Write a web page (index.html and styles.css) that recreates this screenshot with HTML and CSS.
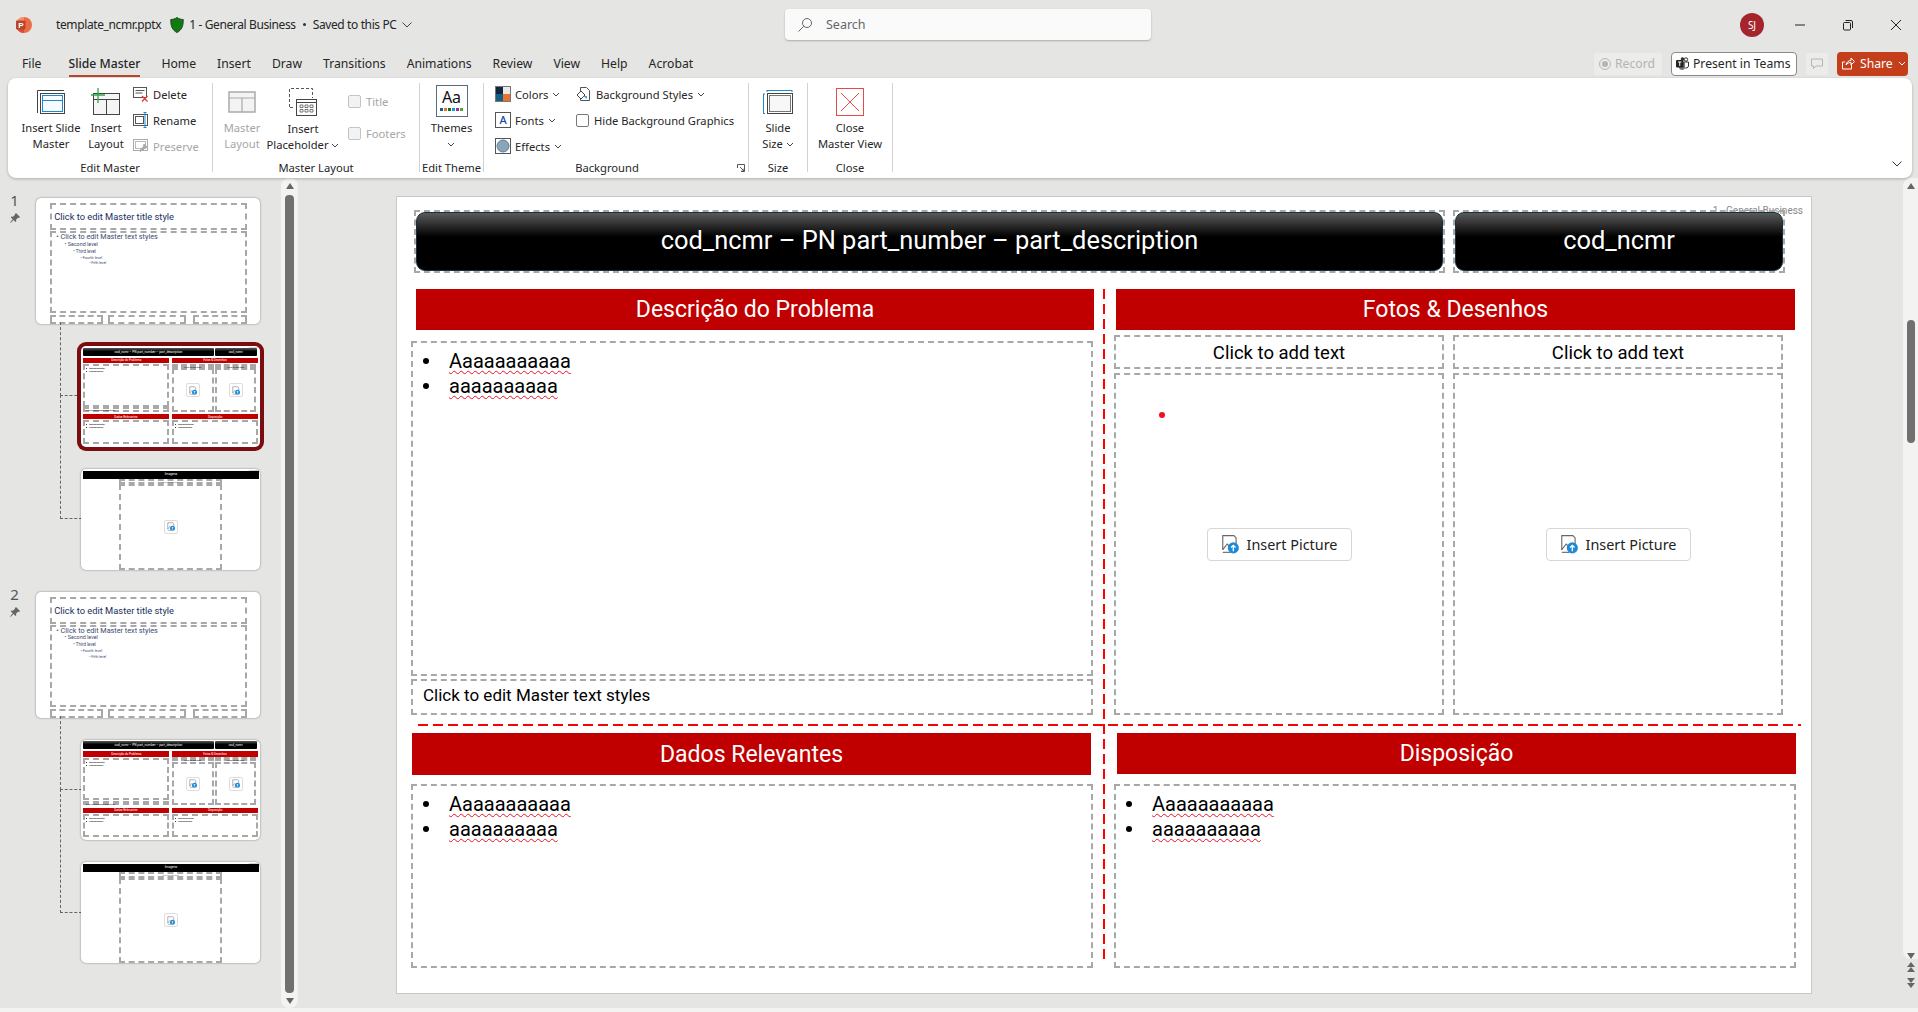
FILE: index.html
```html
<!DOCTYPE html>
<html lang="en">
<head>
	<meta charset="UTF-8">
	<title>template_ncmr.pptx - PowerPoint</title>
	<link rel="stylesheet" href="styles.css">
</head>
<body>
	<svg class="defs" aria-hidden="true">
		<symbol id="chev" viewBox="0 0 8 5"><path d="M1 1l3 3 3-3" fill="none" stroke="#444" stroke-width="1"/></symbol>
		<symbol id="picicon" viewBox="0 0 16 18">
			<path d="M1.5 14.5v-13h10l2 2v6" fill="#fff" stroke="#666"/>
			<path d="M1.5 14l4-5 3 3 2-1" fill="none" stroke="#666"/>
			<path d="M1.5 16.5h7" stroke="#666"/>
			<circle cx="11" cy="12.5" r="5" fill="#1c8ad6"/>
			<path d="M11 15.5v-5M9 12.2l2-2 2 2" fill="none" stroke="#fff" stroke-width="1.2"/>
		</symbol>
		<symbol id="pin" viewBox="0 0 10 10"><path d="M6 0l4 4-1 1-1-.3-2 2 .3 1.6-.8.7-2-2L.8 9.7 0 9.5l2.700-3.300-2-2 .7-.8 1.600.3 2-2L5 1z" fill="#666"/></symbol>
	</svg>

	<div class="titlebar">
		<div class="title-left">
			<svg class="ppt-logo" viewBox="0 0 16 16" width="16" height="16">
				<circle cx="8" cy="8" r="8" fill="#ed6c47"/>
				<path d="M8 0a8 8 0 0 0-8 8h8z" fill="#ff8f6b"/>
				<path d="M8 16a8 8 0 0 1-8-8h8z" fill="#d35230"/>
				<rect x="0" y="3.500" width="9.500" height="9" rx="1" fill="#b7472a"/>
				<text x="2.200" y="11" class="ppt-p">P</text>
			</svg>
			<span class="filename">template_ncmr.pptx</span>
			<svg class="shield" viewBox="0 0 14 16" width="14" height="16"><path d="M7 .5c2 1.500 4 2 6.200 2 .2 6-1.200 10.500-6.200 13C2 13 .6 8.500.8 2.500 3 2.500 5 2 7 .5z" fill="#107c10" stroke="#25402a"/></svg>
			<span class="doc-status">1 - General Business</span>
			<span class="doc-dot"></span>
			<span class="doc-status">Saved to this PC</span>
			<svg class="chev-lg" viewBox="0 0 10 6" width="10" height="6"><path d="M.5.5L5 5 9.500.5" fill="none" stroke="#444"/></svg>
		</div>
		<div class="search">
			<svg viewBox="0 0 16 16" width="16" height="16"><circle cx="10" cy="6" r="4.500" fill="none" stroke="#666"/><path d="M6.800 9.200L1.500 14.500" stroke="#666"/></svg>
			<span>Search</span>
		</div>
		<div class="title-right">
			<div class="avatar">SJ</div>
			<div class="winbtn"><svg viewBox="0 0 12 12" width="12" height="12"><path d="M1 6h10" stroke="#222"/></svg></div>
			<div class="winbtn"><svg viewBox="0 0 12 12" width="12" height="12"><rect x="1.500" y="3.500" width="7" height="7.500" rx="1" fill="none" stroke="#222"/><path d="M3.500 1.500h5.500a1.500 1.500 0 0 1 1.500 1.500v6" fill="none" stroke="#222"/></svg></div>
			<div class="winbtn"><svg viewBox="0 0 12 12" width="12" height="12"><path d="M1 1l10 10M11 1L1 11" stroke="#222"/></svg></div>
		</div>
	</div>

	<div class="tabrow">
		<div class="tabs">
			<span class="tab tab-file">File</span>
			<span class="tab active">Slide Master</span>
			<span class="tab">Home</span>
			<span class="tab">Insert</span>
			<span class="tab">Draw</span>
			<span class="tab">Transitions</span>
			<span class="tab">Animations</span>
			<span class="tab">Review</span>
			<span class="tab">View</span>
			<span class="tab">Help</span>
			<span class="tab">Acrobat</span>
		</div>
		<div class="tab-actions">
			<div class="soft-btn record"><svg viewBox="0 0 12 12" width="12" height="12"><circle cx="6" cy="6" r="5.500" fill="none" stroke="#b5b5b5"/><circle cx="6" cy="6" r="3" fill="#b5b5b5"/></svg>Record</div>
			<div class="teams-btn">
				<svg viewBox="0 0 13 13" width="13" height="13"><circle cx="10" cy="2.500" r="1.700" fill="none" stroke="#333"/><path d="M8 5h4.500v4a2.500 2.500 0 0 1-4 1.500" fill="none" stroke="#333"/><circle cx="6.500" cy="2" r="1.800" fill="#333"/><path d="M3 5h6v5a3 3 0 0 1-6 0z" fill="#777"/><rect x="0" y="3" width="7.500" height="7.500" rx="1" fill="#222"/><path d="M2 5h3.500M3.750 5v4" stroke="#fff" stroke-width="1"/></svg>
				Present in Teams
			</div>
			<div class="soft-btn comment"><svg viewBox="0 0 12 12" width="12" height="12"><path d="M.5 1h11v7H5l-2.500 2.500V8h-2z" fill="none" stroke="#b5b5b5"/></svg></div>
			<div class="share-btn">
				<svg viewBox="0 0 13 13" width="13" height="13"><path d="M9.500 6.500V12H.5V5H3M4 8c.5-3 2.500-4.500 5-4.500V1l3.500 3.500L9 8V5.500C7 5.500 5.200 6.300 4 8z" fill="none" stroke="#fff"/></svg>
				<span>Share</span>
				<svg class="chev" viewBox="0 0 8 5"><path d="M1 1l3 3 3-3" fill="none" stroke="#fff"/></svg>
			</div>
		</div>
	</div>

	<div class="ribbon">
		<div class="group g-master">
			<div class="group-body">
				<div class="big w58">
					<div class="big-icon">
						<svg viewBox="0 0 28 24" width="28" height="24"><path d="M.5 23V.5H27" fill="none" stroke="#444"/><rect x="3.500" y="3.500" width="24" height="20" fill="#fff" stroke="#444"/><rect x="5.500" y="5.500" width="20" height="16" fill="#f5fbff" stroke="#1e88c9"/><path d="M5.500 10.500h20" stroke="#1e88c9"/></svg>
					</div>
					<div class="big-text">Insert Slide<br>Master</div>
				</div>
				<div class="big w36">
					<div class="big-icon">
						<svg viewBox="0 0 30 28" width="30" height="28"><rect x="2.500" y="5.500" width="26" height="21" fill="#f5f5f5" stroke="#444"/><path d="M2.500 11.500h26M15.500 11.500v15" stroke="#444"/><path d="M0 7h14M7 0v15" stroke="#2ea84a" stroke-width="1.300"/></svg>
					</div>
					<div class="big-text">Insert<br>Layout</div>
				</div>
				<div class="stack">
					<div class="small">
						<svg viewBox="0 0 16 16" width="16" height="16"><rect x=".5" y="1.500" width="13" height="10" fill="#fff" stroke="#555"/><path d="M2.500 4.500h9M2.500 7h7" stroke="#555"/><path d="M9 10l5.500 5.500M14.500 10L9 15.500" stroke="#e03a3a" stroke-width="1.300"/></svg>
						Delete
					</div>
					<div class="small">
						<svg viewBox="0 0 16 16" width="16" height="16"><rect x=".5" y="2.500" width="14" height="11" fill="#fff" stroke="#555"/><rect x="2.500" y="4.500" width="8" height="7" fill="none" stroke="#555"/><path d="M10.500.5h3M12 .5v15M10.500 15.500h3" stroke="#1e88c9"/></svg>
						Rename
					</div>
					<div class="small off">
						<svg viewBox="0 0 16 16" width="16" height="16"><rect x=".5" y="1.500" width="14" height="11" fill="#fff" stroke="#aaa"/><rect x="2.500" y="3.500" width="10" height="7" fill="none" stroke="#bbb"/><path d="M11 6l3 3-2 1-3 3-1.500-1.500 3-3zM7 14l2-2" fill="#aaa" stroke="#aaa"/></svg>
						Preserve
					</div>
				</div>
			</div>
			<div class="group-label">Edit Master</div>
		</div>

		<div class="group g-layout">
			<div class="group-body">
				<div class="big w36 off">
					<div class="big-icon">
						<svg viewBox="0 0 28 22" width="28" height="22"><rect x="1" y="1" width="26" height="20" fill="#f3f3f3" stroke="#aaa" stroke-width="1.500"/><path d="M1 7h26M14 7v14" stroke="#aaa" stroke-width="1.200"/></svg>
					</div>
					<div class="big-text">Master<br>Layout</div>
				</div>
				<div class="big w72">
					<div class="big-icon">
						<svg viewBox="0 0 28 28" width="28" height="28"><path d="M.5 19V.5h23V10" fill="none" stroke="#555" stroke-dasharray="3 2"/><path d="M1 19.500h4" stroke="#555" stroke-dasharray="3 2"/><rect x="7.500" y="11.500" width="20" height="16" fill="#fff" stroke="#444"/><path d="M7.500 14.500h20" stroke="#444"/><path d="M11 17h3v2.500h-3zM16 17h3v2.500h-3zM21 17h3v2.500h-3zM11 21.500h3V24h-3zM16 21.500h3V24h-3zM21 21.500h3V24h-3z" fill="#fff" stroke="#555" stroke-width=".8"/></svg>
					</div>
					<div class="big-text text-low">Insert<br>Placeholder <svg class="chev"><use href="#chev"/></svg></div>
				</div>
				<div class="checks">
					<div class="check off"><span class="box"></span>Title</div>
					<div class="check off"><span class="box"></span>Footers</div>
				</div>
			</div>
			<div class="group-label">Master Layout</div>
		</div>

		<div class="group g-theme">
			<div class="group-body">
				<div class="big w-full">
					<div class="themes-icon">
						<span class="aa">Aa</span>
						<span class="swatches"><i class="s1"></i><i class="s2"></i><i class="s3"></i><i class="s4"></i><i class="s5"></i><i class="s6"></i></span>
					</div>
					<div class="big-text">Themes<br><svg class="chev"><use href="#chev"/></svg></div>
				</div>
			</div>
			<div class="group-label">Edit Theme</div>
		</div>

		<div class="group g-background">
			<div class="group-body">
				<div class="stack stack-colors">
					<div class="small">
						<svg viewBox="0 0 16 16" width="16" height="16"><rect x="0" y="0" width="8" height="8" fill="#0e2841"/><rect x="8" y="0" width="8" height="8" fill="#e8e8e8"/><rect x="0" y="8" width="8" height="8" fill="#156082"/><rect x="8" y="8" width="8" height="8" fill="#e97132"/><rect x=".5" y=".5" width="15" height="15" fill="none" stroke="#777"/></svg>
						Colors <svg class="chev"><use href="#chev"/></svg>
					</div>
					<div class="small">
						<span class="font-icon">A</span>
						Fonts <svg class="chev"><use href="#chev"/></svg>
					</div>
					<div class="small">
						<svg viewBox="0 0 16 16" width="16" height="16"><rect x=".5" y=".5" width="15" height="15" fill="#fff" stroke="#555"/><circle cx="8" cy="8" r="6" fill="#8aa5b8" stroke="#5d7f97"/></svg>
						Effects <svg class="chev"><use href="#chev"/></svg>
					</div>
				</div>
				<div class="stack">
					<div class="small">
						<svg viewBox="0 0 16 16" width="16" height="16"><path d="M4.500 1.500h6l3 3v10h-9z" fill="#fff" stroke="#555"/><path d="M1 9l4-4 4 4-4 4z" fill="#fff" stroke="#444"/><path d="M7 10l4 3v-3z" fill="#4aa3df"/></svg>
						Background Styles <svg class="chev"><use href="#chev"/></svg>
					</div>
					<div class="check"><span class="box"></span>Hide Background Graphics</div>
				</div>
			</div>
			<div class="group-label label-bg">Background</div>
			<svg class="launcher" viewBox="0 0 8 8" width="8" height="8"><path d="M.5 4V.5H7.500V7.500H4M3 3l4 4M7 4.500V7H4.500" fill="none" stroke="#555"/></svg>
		</div>

		<div class="group g-size">
			<div class="group-body">
				<div class="big w-full">
					<div class="big-icon">
						<svg viewBox="0 0 30 24" width="30" height="24"><path d="M4 .5h25M4 0v2M29 0v2M.5 4v20M0 4h2M0 23.500h2" fill="none" stroke="#1e88c9"/><rect x="4.500" y="3.500" width="25" height="20" fill="#fff" stroke="#444"/><rect x="6.500" y="5.500" width="21" height="16" fill="#f7f7f7" stroke="#777"/></svg>
					</div>
					<div class="big-text">Slide<br>Size <svg class="chev"><use href="#chev"/></svg></div>
				</div>
			</div>
			<div class="group-label">Size</div>
		</div>

		<div class="group g-close">
			<div class="group-body">
				<div class="big w-full">
					<div class="big-icon">
						<svg viewBox="0 0 28 28" width="28" height="28"><rect x=".5" y=".5" width="27" height="27" fill="#fff" stroke="#e84a4a"/><path d="M5 5l18 18M23 5L5 23" stroke="#e84a4a"/></svg>
					</div>
					<div class="big-text">Close<br>Master View</div>
				</div>
			</div>
			<div class="group-label">Close</div>
		</div>

		<svg class="collapse" viewBox="0 0 10 6" width="10" height="6"><path d="M.5.5L5 5 9.500.5" fill="none" stroke="#333"/></svg>
	</div>

	<div class="workspace">
		<div class="thumb-pane">
			<div class="thumb-list">
				<div class="master-row">
					<div class="slide-no">1<svg class="pin"><use href="#pin"/></svg></div>
					<div class="slide thumb-master">
						<div class="ph m-title"><span>Click to edit Master title style</span></div>
						<div class="ph m-body">
							<p class="lv1">• Click to edit Master text styles</p>
							<p class="lv2">• Second level</p>
							<p class="lv3">• Third level</p>
							<p class="lv4">• Fourth level</p>
							<p class="lv5">• Fifth level</p>
						</div>
						<div class="ph m-foot1"></div>
						<div class="ph m-foot2"></div>
						<div class="ph m-foot3"></div>
					</div>
				</div>

				<div class="layout-row conn-first">
					<div class="slide thumb-layout selected">
						<div class="mark">1 - General Business</div>
						<div class="ph bar1"><div class="bar-fill">cod_ncmr – PN part_number – part_description</div></div>
						<div class="ph bar2"><div class="bar-fill">cod_ncmr</div></div>
						<div class="red r1">Descrição do Problema</div>
						<div class="red r2">Fotos &amp; Desenhos</div>
						<div class="red r3">Dados Relevantes</div>
						<div class="red r4">Disposição</div>
						<div class="ph b1"><ul><li><u>Aaaaaaaaaaa</u></li><li><u>aaaaaaaaaa</u></li></ul></div>
						<div class="ph cap">Click to edit Master text styles</div>
						<div class="ph lab1">Click to add text</div>
						<div class="ph lab2">Click to add text</div>
						<div class="ph pic1"><div class="pic-btn"><svg><use href="#picicon"/></svg></div></div>
						<div class="ph pic2"><div class="pic-btn"><svg><use href="#picicon"/></svg></div></div>
						<div class="ph b2"><ul><li><u>Aaaaaaaaaaa</u></li><li><u>aaaaaaaaaa</u></li></ul></div>
						<div class="ph b3"><ul><li><u>Aaaaaaaaaaa</u></li><li><u>aaaaaaaaaa</u></li></ul></div>
					</div>
				</div>

				<div class="layout-row conn-next">
					<div class="slide thumb-layout">
						<div class="mark">1 - General Business</div>
						<div class="bar-img">Imagens</div>
						<div class="ph img-lab">Click to add text</div>
						<div class="ph img-pic"><div class="pic-btn"><svg><use href="#picicon"/></svg></div></div>
					</div>
				</div>

				<div class="master-row">
					<div class="slide-no">2<svg class="pin"><use href="#pin"/></svg></div>
					<div class="slide thumb-master">
						<div class="ph m-title"><span>Click to edit Master title style</span></div>
						<div class="ph m-body">
							<p class="lv1">• Click to edit Master text styles</p>
							<p class="lv2">• Second level</p>
							<p class="lv3">• Third level</p>
							<p class="lv4">• Fourth level</p>
							<p class="lv5">• Fifth level</p>
						</div>
						<div class="ph m-foot1"></div>
						<div class="ph m-foot2"></div>
						<div class="ph m-foot3"></div>
					</div>
				</div>

				<div class="layout-row conn-first">
					<div class="slide thumb-layout">
						<div class="mark">1 - General Business</div>
						<div class="ph bar1"><div class="bar-fill">cod_ncmr – PN part_number – part_description</div></div>
						<div class="ph bar2"><div class="bar-fill">cod_ncmr</div></div>
						<div class="red r1">Descrição do Problema</div>
						<div class="red r2">Fotos &amp; Desenhos</div>
						<div class="red r3">Dados Relevantes</div>
						<div class="red r4">Disposição</div>
						<div class="ph b1"><ul><li><u>Aaaaaaaaaaa</u></li><li><u>aaaaaaaaaa</u></li></ul></div>
						<div class="ph cap">Click to edit Master text styles</div>
						<div class="ph lab1">Click to add text</div>
						<div class="ph lab2">Click to add text</div>
						<div class="ph pic1"><div class="pic-btn"><svg><use href="#picicon"/></svg></div></div>
						<div class="ph pic2"><div class="pic-btn"><svg><use href="#picicon"/></svg></div></div>
						<div class="ph b2"><ul><li><u>Aaaaaaaaaaa</u></li><li><u>aaaaaaaaaa</u></li></ul></div>
						<div class="ph b3"><ul><li><u>Aaaaaaaaaaa</u></li><li><u>aaaaaaaaaa</u></li></ul></div>
					</div>
				</div>

				<div class="layout-row conn-next">
					<div class="slide thumb-layout">
						<div class="mark">1 - General Business</div>
						<div class="bar-img">Imagens</div>
						<div class="ph img-lab">Click to add text</div>
						<div class="ph img-pic"><div class="pic-btn"><svg><use href="#picicon"/></svg></div></div>
					</div>
				</div>
			</div>

			<div class="vscroll">
				<span class="arrow-up"></span>
				<div class="vscroll-thumb"></div>
				<span class="arrow-down"></span>
			</div>
		</div>

		<div class="stage">
			<div class="slide slide-main">
				<div class="mark">1 - General Business</div>
				<div class="ph bar1"><div class="bar-fill">cod_ncmr – PN part_number – part_description</div></div>
				<div class="ph bar2"><div class="bar-fill">cod_ncmr</div></div>
				<div class="red r1">Descrição do Problema</div>
				<div class="red r2">Fotos &amp; Desenhos</div>
				<div class="red r3">Dados Relevantes</div>
				<div class="red r4">Disposição</div>
				<div class="ph b1"><ul><li><u>Aaaaaaaaaaa</u></li><li><u>aaaaaaaaaa</u></li></ul></div>
				<div class="ph cap">Click to edit Master text styles</div>
				<div class="ph lab1">Click to add text</div>
				<div class="ph lab2">Click to add text</div>
				<div class="ph pic1"><div class="pic-btn"><svg><use href="#picicon"/></svg>Insert Picture</div></div>
				<div class="ph pic2"><div class="pic-btn"><svg><use href="#picicon"/></svg>Insert Picture</div></div>
				<div class="ph b2"><ul><li><u>Aaaaaaaaaaa</u></li><li><u>aaaaaaaaaa</u></li></ul></div>
				<div class="ph b3"><ul><li><u>Aaaaaaaaaaa</u></li><li><u>aaaaaaaaaa</u></li></ul></div>
				<div class="guide-v"></div>
				<div class="guide-h"></div>
				<div class="red-dot"></div>
			</div>
		</div>

		<div class="stage-scroll">
			<div class="stage-track">
				<span class="arrow-up"></span>
				<div class="stage-thumb"></div>
				<span class="arrow-down"></span>
			</div>
			<div class="page-arrows">
				<span class="arrow-double up"></span>
				<span class="arrow-double"></span>
			</div>
		</div>
	</div>

	<div class="statusbar"></div>
</body>
</html>
```

FILE: styles.css
```css
* {
	box-sizing: border-box;
}
html, body {
	margin: 0;
	padding: 0;
	height: 100%;
}
body {
	width: 1918px;
	height: 1012px;
	overflow: hidden;
	background: #e5e5e3;
	color: #262626;
	font-family: "Noto Sans", "Open Sans", sans-serif;
	font-size: 12px;
}
.defs {
	display: none;
}
.chev {
	width: 8px;
	height: 5px;
	vertical-align: 1px;
}

/* title bar */
.titlebar {
	display: flex;
	align-items: center;
	height: 49px;
}
.title-left {
	display: flex;
	align-items: center;
	width: 785px;
	padding-left: 16px;
	font-size: 12px;
	letter-spacing: -.38px;
}
.ppt-logo {
	margin-right: 24px;
}
.ppt-p {
	font: bold 8px "Liberation Sans", sans-serif;
	fill: #fff;
}
.filename {
	margin-right: 9px;
}
.shield {
	margin-right: 5px;
}
.doc-dot {
	width: 3px;
	height: 3px;
	margin: 0 7px;
	border-radius: 50%;
	background: #333;
}
.chev-lg {
	margin-left: 5px;
}
.search {
	display: flex;
	align-items: center;
	gap: 13px;
	width: 366px;
	height: 31px;
	padding-left: 12px;
	background: #fafafa;
	border-radius: 4px;
	box-shadow: 0 1px 2px rgba(0, 0, 0, .25);
	color: #666;
	font-size: 12.500px;
}
.title-right {
	display: flex;
	align-items: center;
	margin-left: auto;
}
.avatar {
	width: 24px;
	height: 24px;
	margin-right: 10px;
	border-radius: 50%;
	background: #a4262c;
	color: #fff;
	font-size: 10px;
	line-height: 24px;
	text-align: center;
}
.winbtn {
	display: flex;
	justify-content: center;
	width: 48px;
	padding-left: 4px;
}

/* tabs */
.tabrow {
	display: flex;
	align-items: center;
	height: 29px;
	padding: 0 10px 0 22px;
}
.tabs {
	display: flex;
	gap: 21px;
}
.tab {
	position: relative;
	font-size: 12.200px;
	line-height: 20px;
}
.tab-file {
	margin-right: 6px;
}
.tab.active {
	font-weight: 500;
}
.tab.active::after {
	content: "";
	position: absolute;
	left: 0;
	right: 0;
	bottom: -3px;
	height: 2px;
	background: #b7472a;
}
.tab-actions {
	display: flex;
	align-items: center;
	gap: 9px;
	margin-left: auto;
}
.soft-btn {
	display: flex;
	align-items: center;
	height: 22px;
	padding: 0 6px 0 5px;
	gap: 4px;
	background: #ececeb;
	border-radius: 3px;
	color: #b3b3b3;
	font-size: 12.200px;
}
.record {
	width: 68px;
}
.comment {
	width: 22px;
	justify-content: center;
	padding: 0;
}
.teams-btn {
	display: flex;
	align-items: center;
	gap: 4px;
	width: 126px;
	height: 24px;
	padding-left: 4px;
	background: #fff;
	border: 1px solid #8a8a8a;
	border-radius: 4px;
	font-size: 12.200px;
}
.share-btn {
	display: flex;
	align-items: center;
	gap: 5px;
	width: 71px;
	height: 24px;
	padding-left: 5px;
	background: #c43e1c;
	border-radius: 4px;
	color: #fff;
	font-size: 12.200px;
}

/* ribbon */
.ribbon {
	position: relative;
	display: flex;
	height: 100px;
	margin: 0 6px 0 8px;
	padding-top: 5px;
	background: #fff;
	border-radius: 8px;
	box-shadow: 0 1px 3px rgba(0, 0, 0, .25);
}
.group {
	position: relative;
	display: flex;
	flex-direction: column;
	height: 89px;
	border-right: 1px solid #d2d2d2;
}
.group-body {
	display: flex;
	height: 77px;
}
.group-label {
	height: 12px;
	line-height: 16px;
	font-size: 11.200px;
	text-align: center;
	white-space: nowrap;
}
.g-master { width: 205px; }
.g-master .group-body { padding-left: 14px; gap: 8px; }
.g-layout { width: 207px; }
.g-layout .group-body { padding-left: 11px; gap: 7px; }
.g-theme { width: 64px; }
.g-background { width: 265px; }
.g-background .group-body { padding-left: 11px; }
.g-size { width: 59px; }
.g-close { width: 85px; }
.label-bg {
	padding-right: 18px;
}
.big {
	display: flex;
	flex-direction: column;
	align-items: center;
	white-space: nowrap;
}
.w36 { width: 36px; }
.w58 { width: 58px; }
.w72 { width: 72px; }
.w-full { width: 100%; }
.big-icon {
	display: flex;
	align-items: center;
	justify-content: center;
	height: 37px;
}
.big-text {
	line-height: 16px;
	text-align: center;
	font-size: 11.200px;
}
.text-low {
	margin-top: 1px;
}
.off {
	color: #a6a6a6;
}
.stack {
	display: flex;
	flex-direction: column;
	gap: 4px;
	margin-left: 1px;
}
.stack-colors {
	width: 80px;
	margin-left: 0;
}
.small {
	display: flex;
	align-items: center;
	gap: 4px;
	height: 22px;
	font-size: 11.200px;
	white-space: nowrap;
}
.checks {
	display: flex;
	flex-direction: column;
	gap: 16px;
	padding-top: 10px;
	margin-left: 2px;
}
.check {
	display: flex;
	align-items: center;
	gap: 5px;
	height: 22px;
	font-size: 11.200px;
	white-space: nowrap;
}
.checks .check {
	height: 16px;
}
.box {
	width: 13px;
	height: 13px;
	background: #fff;
	border: 1px solid #777;
	border-radius: 2px;
}
.off .box {
	background: #f3f3f3;
	border-color: #c4c4c4;
}
.themes-icon {
	display: flex;
	flex-direction: column;
	align-items: center;
	width: 32px;
	height: 32px;
	margin: 2px 0 3px;
	border: 1px solid #5b6b7f;
	background: #fff;
}
.aa {
	height: 20px;
	color: #111;
	font-size: 16px;
	line-height: 22px;
}
.swatches {
	display: flex;
	gap: 1px;
	margin-top: 2px;
}
.swatches i {
	width: 3px;
	height: 3px;
}
.s1 { background: #156082; }
.s2 { background: #e97132; }
.s3 { background: #196b24; }
.s4 { background: #0f9ed5; }
.s5 { background: #a02b93; }
.s6 { background: #4ea72e; }
.font-icon {
	width: 16px;
	height: 16px;
	border: 1px solid #555;
	color: #1746b0;
	font-size: 11px;
	font-weight: 500;
	line-height: 14px;
	text-align: center;
}
.launcher {
	position: absolute;
	right: 3px;
	bottom: 0;
}
.collapse {
	position: absolute;
	right: 10px;
	bottom: 11px;
}

/* main area */
.workspace {
	display: flex;
	height: 830px;
}
.thumb-pane {
	display: flex;
	width: 302px;
}
.thumb-list {
	display: flex;
	flex-direction: column;
	gap: 22px;
	width: 281px;
	padding-top: 20px;
}
.master-row {
	display: flex;
}
.slide-no {
	display: flex;
	flex-direction: column;
	align-items: center;
	width: 36px;
	margin-top: -5px;
	padding-right: 7px;
	color: #555;
	font-size: 15px;
	line-height: 15px;
}
.pin {
	width: 10px;
	height: 10px;
	margin-top: 5px;
}
.layout-row {
	position: relative;
	margin-left: 81px;
}
.layout-row::before {
	content: "";
	position: absolute;
	left: -21px;
	bottom: 50%;
	width: 21px;
	border-left: 1px dashed #666;
	border-bottom: 1px dashed #666;
}
.conn-first::before { height: 73px; }
.conn-next::before { height: 123px; }

.vscroll {
	display: flex;
	flex-direction: column;
	align-items: center;
	width: 17px;
	padding-top: 5px;
	background: #f3f3f2;
	border-radius: 8px;
}
.vscroll-thumb {
	width: 9px;
	height: 798px;
	margin: 6px 0 5px;
	background: #707070;
	border-radius: 4px;
}
.arrow-up, .arrow-down {
	width: 0;
	height: 0;
	border-left: 4px solid transparent;
	border-right: 4px solid transparent;
}
.arrow-up { border-bottom: 6px solid #666; }
.arrow-down { border-top: 6px solid #666; }

.stage {
	flex: 1;
	padding: 19px 0 0 95px;
}
.stage-scroll {
	width: 15px;
}
.stage-track {
	display: flex;
	flex-direction: column;
	align-items: center;
	height: 781px;
	padding-top: 5px;
	background: #f3f3f2;
	border-radius: 8px 0 0 8px;
}
.stage-thumb {
	width: 8px;
	height: 123px;
	margin: 131px 0 510px;
	background: #707070;
	border-radius: 4px;
}
.page-arrows {
	display: flex;
	flex-direction: column;
	align-items: center;
	gap: 6px;
	padding-top: 3px;
}
.arrow-double {
	width: 0;
	height: 0;
	border-left: 4px solid transparent;
	border-right: 4px solid transparent;
	border-top: 5px solid #666;
	position: relative;
	margin-bottom: 5px;
}
.arrow-double::after {
	content: "";
	position: absolute;
	left: -4px;
	top: 0;
	border-left: 4px solid transparent;
	border-right: 4px solid transparent;
	border-top: 5px solid #666;
}
.arrow-double.up {
	border-top: 0;
	border-bottom: 5px solid #666;
}
.arrow-double.up::after {
	top: 5px;
	border-top: 0;
	border-bottom: 5px solid #666;
}
.statusbar {
	height: 4px;
	background: #f3f3f2;
}

/* slides: one drawing, every size is a multiple of --s */
.slide {
	--s: 1px;
	position: relative;
	flex: none;
	width: calc(1414 * var(--s));
	height: calc(796 * var(--s));
	background: #fff;
	color: #000;
	font-family: Roboto, "Liberation Sans", sans-serif;
}
.slide-main {
	outline: 1px solid #c8c8c8;
}
.thumb-layout {
	--s: .1266px;
	overflow: hidden;
	border-radius: 5px;
	box-shadow: 0 0 2px rgba(0, 0, 0, .5);
}
.thumb-master {
	--s: .1584px;
	overflow: hidden;
	border-radius: 5px;
	box-shadow: 0 0 2px rgba(0, 0, 0, .5);
}
.selected {
	overflow: visible;
	box-shadow: 0 0 0 4px #7b0c10;
}
.ph {
	position: absolute;
	border: 2px dashed #a8a8a8;
}
.thumb-layout .bar1, .thumb-layout .bar2 {
	border: 0;
}
.thumb-layout .bar-fill {
	border: 0;
	border-radius: 1px;
	padding-bottom: 0;
}
.thumb-layout u {
	text-decoration: none;
}
.mark {
	position: absolute;
	right: calc(8 * var(--s));
	top: calc(8 * var(--s));
	color: #888;
	font-size: calc(10 * var(--s));
	line-height: calc(12 * var(--s));
	white-space: nowrap;
}
.bar1 {
	left: calc(17 * var(--s));
	top: calc(13 * var(--s));
	width: calc(1031 * var(--s));
	height: calc(63 * var(--s));
}
.bar2 {
	left: calc(1056 * var(--s));
	top: calc(13 * var(--s));
	width: calc(332 * var(--s));
	height: calc(63 * var(--s));
}
.bar-fill {
	display: flex;
	align-items: center;
	justify-content: center;
	height: 100%;
	padding-bottom: calc(4 * var(--s));
	background: linear-gradient(#5a5a5a, #000 42%);
	border: 1px solid #16303f;
	border-radius: calc(9 * var(--s));
	color: #fff;
	font-size: calc(25.400 * var(--s));
	white-space: nowrap;
}
.red {
	position: absolute;
	display: flex;
	align-items: center;
	justify-content: center;
	background: #c00000;
	color: #fff;
	font-size: calc(23 * var(--s));
	white-space: nowrap;
}
.r1 { left: calc(19 * var(--s)); top: calc(92 * var(--s)); width: calc(678 * var(--s)); height: calc(41 * var(--s)); }
.r2 { left: calc(719 * var(--s)); top: calc(92 * var(--s)); width: calc(679 * var(--s)); height: calc(41 * var(--s)); }
.r3 { left: calc(15 * var(--s)); top: calc(536 * var(--s)); width: calc(679 * var(--s)); height: calc(42 * var(--s)); }
.r4 { left: calc(720 * var(--s)); top: calc(536 * var(--s)); width: calc(679 * var(--s)); height: calc(41 * var(--s)); }
.b1 { left: calc(14 * var(--s)); top: calc(144 * var(--s)); width: calc(682 * var(--s)); height: calc(335 * var(--s)); }
.b2 { left: calc(14 * var(--s)); top: calc(587 * var(--s)); width: calc(682 * var(--s)); height: calc(184 * var(--s)); }
.b3 { left: calc(717 * var(--s)); top: calc(587 * var(--s)); width: calc(682 * var(--s)); height: calc(184 * var(--s)); }
.cap {
	left: calc(14 * var(--s));
	top: calc(482 * var(--s));
	width: calc(682 * var(--s));
	height: calc(36 * var(--s));
	padding-left: calc(10 * var(--s));
	font-size: calc(17 * var(--s));
	line-height: calc(29 * var(--s));
	white-space: nowrap;
}
.lab1, .lab2 {
	top: calc(138 * var(--s));
	width: calc(330 * var(--s));
	height: calc(34 * var(--s));
	font-size: calc(18.500 * var(--s));
	line-height: calc(33 * var(--s));
	text-align: center;
	white-space: nowrap;
}
.lab1 { left: calc(717 * var(--s)); }
.lab2 { left: calc(1056 * var(--s)); }
.pic1, .pic2 {
	display: flex;
	align-items: center;
	justify-content: center;
	top: calc(176 * var(--s));
	width: calc(330 * var(--s));
	height: calc(342 * var(--s));
}
.pic1 { left: calc(717 * var(--s)); }
.pic2 { left: calc(1056 * var(--s)); }
.pic-btn {
	display: flex;
	align-items: center;
	justify-content: center;
	flex: none;
	width: 14px;
	height: 14px;
	background: #fff;
	border: 1px solid #ddd;
	border-radius: 2px;
}
.pic-btn svg {
	width: 8px;
	height: 9px;
}
.slide-main .pic-btn {
	gap: 8px;
	width: 145px;
	height: 33px;
	border-radius: 4px;
	border-color: #d6d6d6;
	color: #222;
	font-family: "Noto Sans", sans-serif;
	font-size: 14.400px;
}
.slide-main .pic-btn svg {
	width: 18px;
	height: 20px;
}
.ph ul {
	margin: 0;
	padding: calc(5 * var(--s)) 0 0 calc(10 * var(--s));
	list-style: none;
}
.ph li {
	display: flex;
	align-items: center;
	height: calc(25 * var(--s));
	font-size: calc(20 * var(--s));
}
.ph li::before {
	content: "";
	flex: none;
	width: calc(6 * var(--s));
	height: calc(6 * var(--s));
	margin-right: calc(20 * var(--s));
	background: #000;
	border-radius: 50%;
}
.ph u {
	text-decoration: underline wavy #e81123 1px;
	text-underline-offset: 2px;
}
.thumb-layout .ph u {
	text-decoration: none;
}
.guide-v {
	position: absolute;
	left: 706px;
	top: 92px;
	width: 2px;
	height: 674px;
	background: repeating-linear-gradient(#f00 0 10px, transparent 10px 15px);
}
.guide-h {
	position: absolute;
	left: 21px;
	top: 527px;
	width: 1383px;
	height: 2px;
	background: repeating-linear-gradient(90deg, #f00 0 10px, transparent 10px 15px);
}
.red-dot {
	position: absolute;
	left: 762px;
	top: 215px;
	width: 6px;
	height: 6px;
	background: #ee1122;
	border-radius: 50%;
}
.bar-img {
	position: absolute;
	left: calc(16 * var(--s));
	top: calc(16 * var(--s));
	width: calc(1390 * var(--s));
	height: calc(61 * var(--s));
	background: #000;
	color: #fff;
	font-size: calc(26 * var(--s));
	line-height: calc(56 * var(--s));
	text-align: center;
}
.img-lab {
	left: calc(303 * var(--s));
	top: calc(77 * var(--s));
	width: calc(809 * var(--s));
	height: calc(42 * var(--s));
	color: #666;
	font-size: calc(18 * var(--s));
	text-align: center;
}
.img-pic {
	display: flex;
	align-items: center;
	justify-content: center;
	left: calc(303 * var(--s));
	top: calc(119 * var(--s));
	width: calc(809 * var(--s));
	height: calc(677 * var(--s));
}
.m-title {
	display: flex;
	align-items: center;
	left: calc(88 * var(--s));
	top: calc(32 * var(--s));
	width: calc(1243 * var(--s));
	height: calc(172 * var(--s));
	padding-left: calc(14 * var(--s));
	color: #17305c;
	font-size: calc(59 * var(--s));
	white-space: nowrap;
}
.m-body {
	left: calc(88 * var(--s));
	top: calc(208 * var(--s));
	width: calc(1243 * var(--s));
	height: calc(520 * var(--s));
	color: #3a4a70;
	white-space: nowrap;
}
.m-body p {
	margin: 0;
}
.lv1 { padding-left: calc(28 * var(--s)); font-size: calc(46 * var(--s)); line-height: calc(50 * var(--s)); }
.lv2 { padding-left: calc(80 * var(--s)); font-size: calc(34 * var(--s)); line-height: calc(50 * var(--s)); }
.lv3 { padding-left: calc(135 * var(--s)); font-size: calc(28 * var(--s)); line-height: calc(38 * var(--s)); }
.lv4 { padding-left: calc(180 * var(--s)); font-size: calc(24 * var(--s)); line-height: calc(40 * var(--s)); }
.lv5 { padding-left: calc(235 * var(--s)); font-size: calc(22 * var(--s)); line-height: calc(36 * var(--s)); }
.m-foot1 { left: calc(88 * var(--s)); top: calc(740 * var(--s)); width: calc(335 * var(--s)); height: calc(56 * var(--s)); }
.m-foot2 { left: calc(455 * var(--s)); top: calc(740 * var(--s)); width: calc(492 * var(--s)); height: calc(56 * var(--s)); }
.m-foot3 { left: calc(991 * var(--s)); top: calc(740 * var(--s)); width: calc(340 * var(--s)); height: calc(56 * var(--s)); }
```
